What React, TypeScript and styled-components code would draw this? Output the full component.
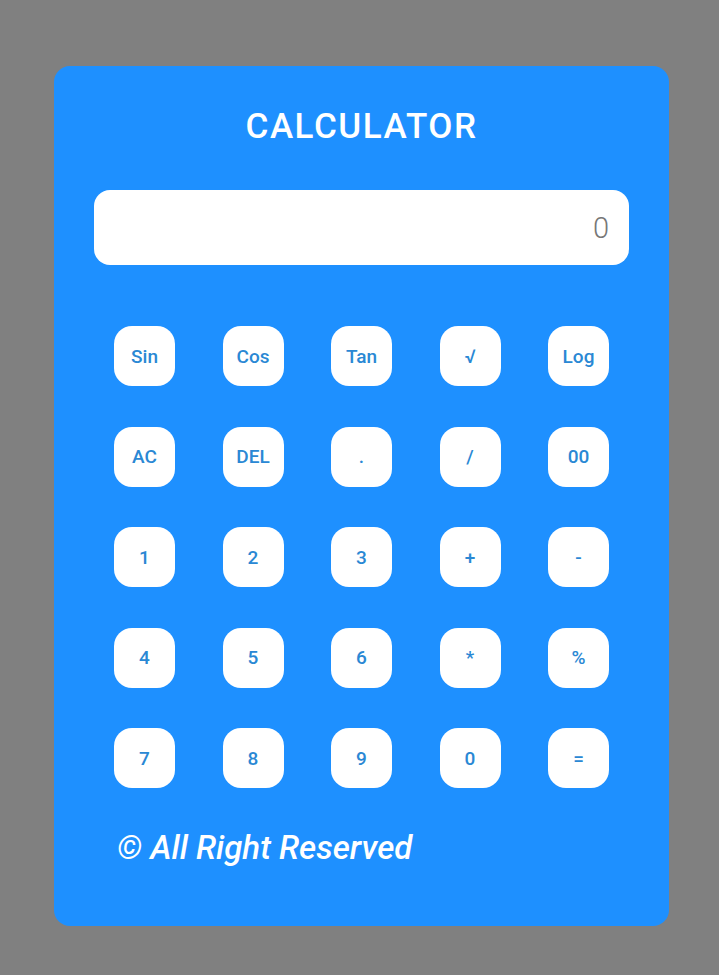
import React from "react";
import styled, { createGlobalStyle } from "styled-components";

const Global = createGlobalStyle`
  html, body { margin: 0; padding: 0; background: #808080; }
  body { font-family: Roboto, "Noto Sans", sans-serif; }
  * { box-sizing: border-box; }
`;

const Page = styled.div`
  padding: 66px 0 49px 54px;
`;

const Card = styled.div`
  width: 615px;
  height: 860px;
  background: #1e90ff;
  border-radius: 16px;
  display: flex;
  flex-direction: column;
  padding: 40px 40px 0 40px;
`;

const Title = styled.h1`
  margin: 0;
  height: 42px;
  line-height: 42px;
  text-align: center;
  color: #ffffff;
  font-family: Roboto, sans-serif;
  font-weight: 500;
  font-size: 35px;
  letter-spacing: 1.5px;
`;

const Display = styled.div`
  margin-top: 42px;
  height: 75px;
  background: #ffffff;
  border-radius: 16px;
  display: flex;
  align-items: center;
  justify-content: flex-end;
  padding-right: 20px;
  color: #777777;
  font-family: Roboto, sans-serif;
  font-weight: 300;
  font-size: 29px;
`;

const Grid = styled.div`
  margin-top: 61px;
  padding: 0 20px;
  display: grid;
  grid-template-columns: repeat(5, 61px);
  justify-content: space-between;
  row-gap: 40.5px;
`;

const Key = styled.button`
  width: 61px;
  height: 60px;
  border: none;
  border-radius: 18px;
  background: #ffffff;
  color: #2a88d4;
  font-family: Roboto, sans-serif;
  font-weight: 500;
  font-size: 19px;
  padding: 0;
  display: flex;
  align-items: center;
  justify-content: center;
  cursor: pointer;
`;

const Footer = styled.p`
  margin: 40px 0 0 23px;
  color: #ffffff;
  font-family: Roboto, sans-serif;
  font-style: italic;
  font-weight: 500;
  font-size: 33px;
  line-height: 40px;
`;

const keys = [
  "Sin", "Cos", "Tan", "√", "Log",
  "AC", "DEL", ".", "/", "00",
  "1", "2", "3", "+", "-",
  "4", "5", "6", "*", "%",
  "7", "8", "9", "0", "=",
];

export default function App() {
  return (
    <Page>
      <Global />
      <Card>
        <Title>CALCULATOR</Title>
        <Display>0</Display>
        <Grid>
          {keys.map((k) => (
            <Key key={k}>{k}</Key>
          ))}
        </Grid>
        <Footer>© All Right Reserved</Footer>
      </Card>
    </Page>
  );
}
